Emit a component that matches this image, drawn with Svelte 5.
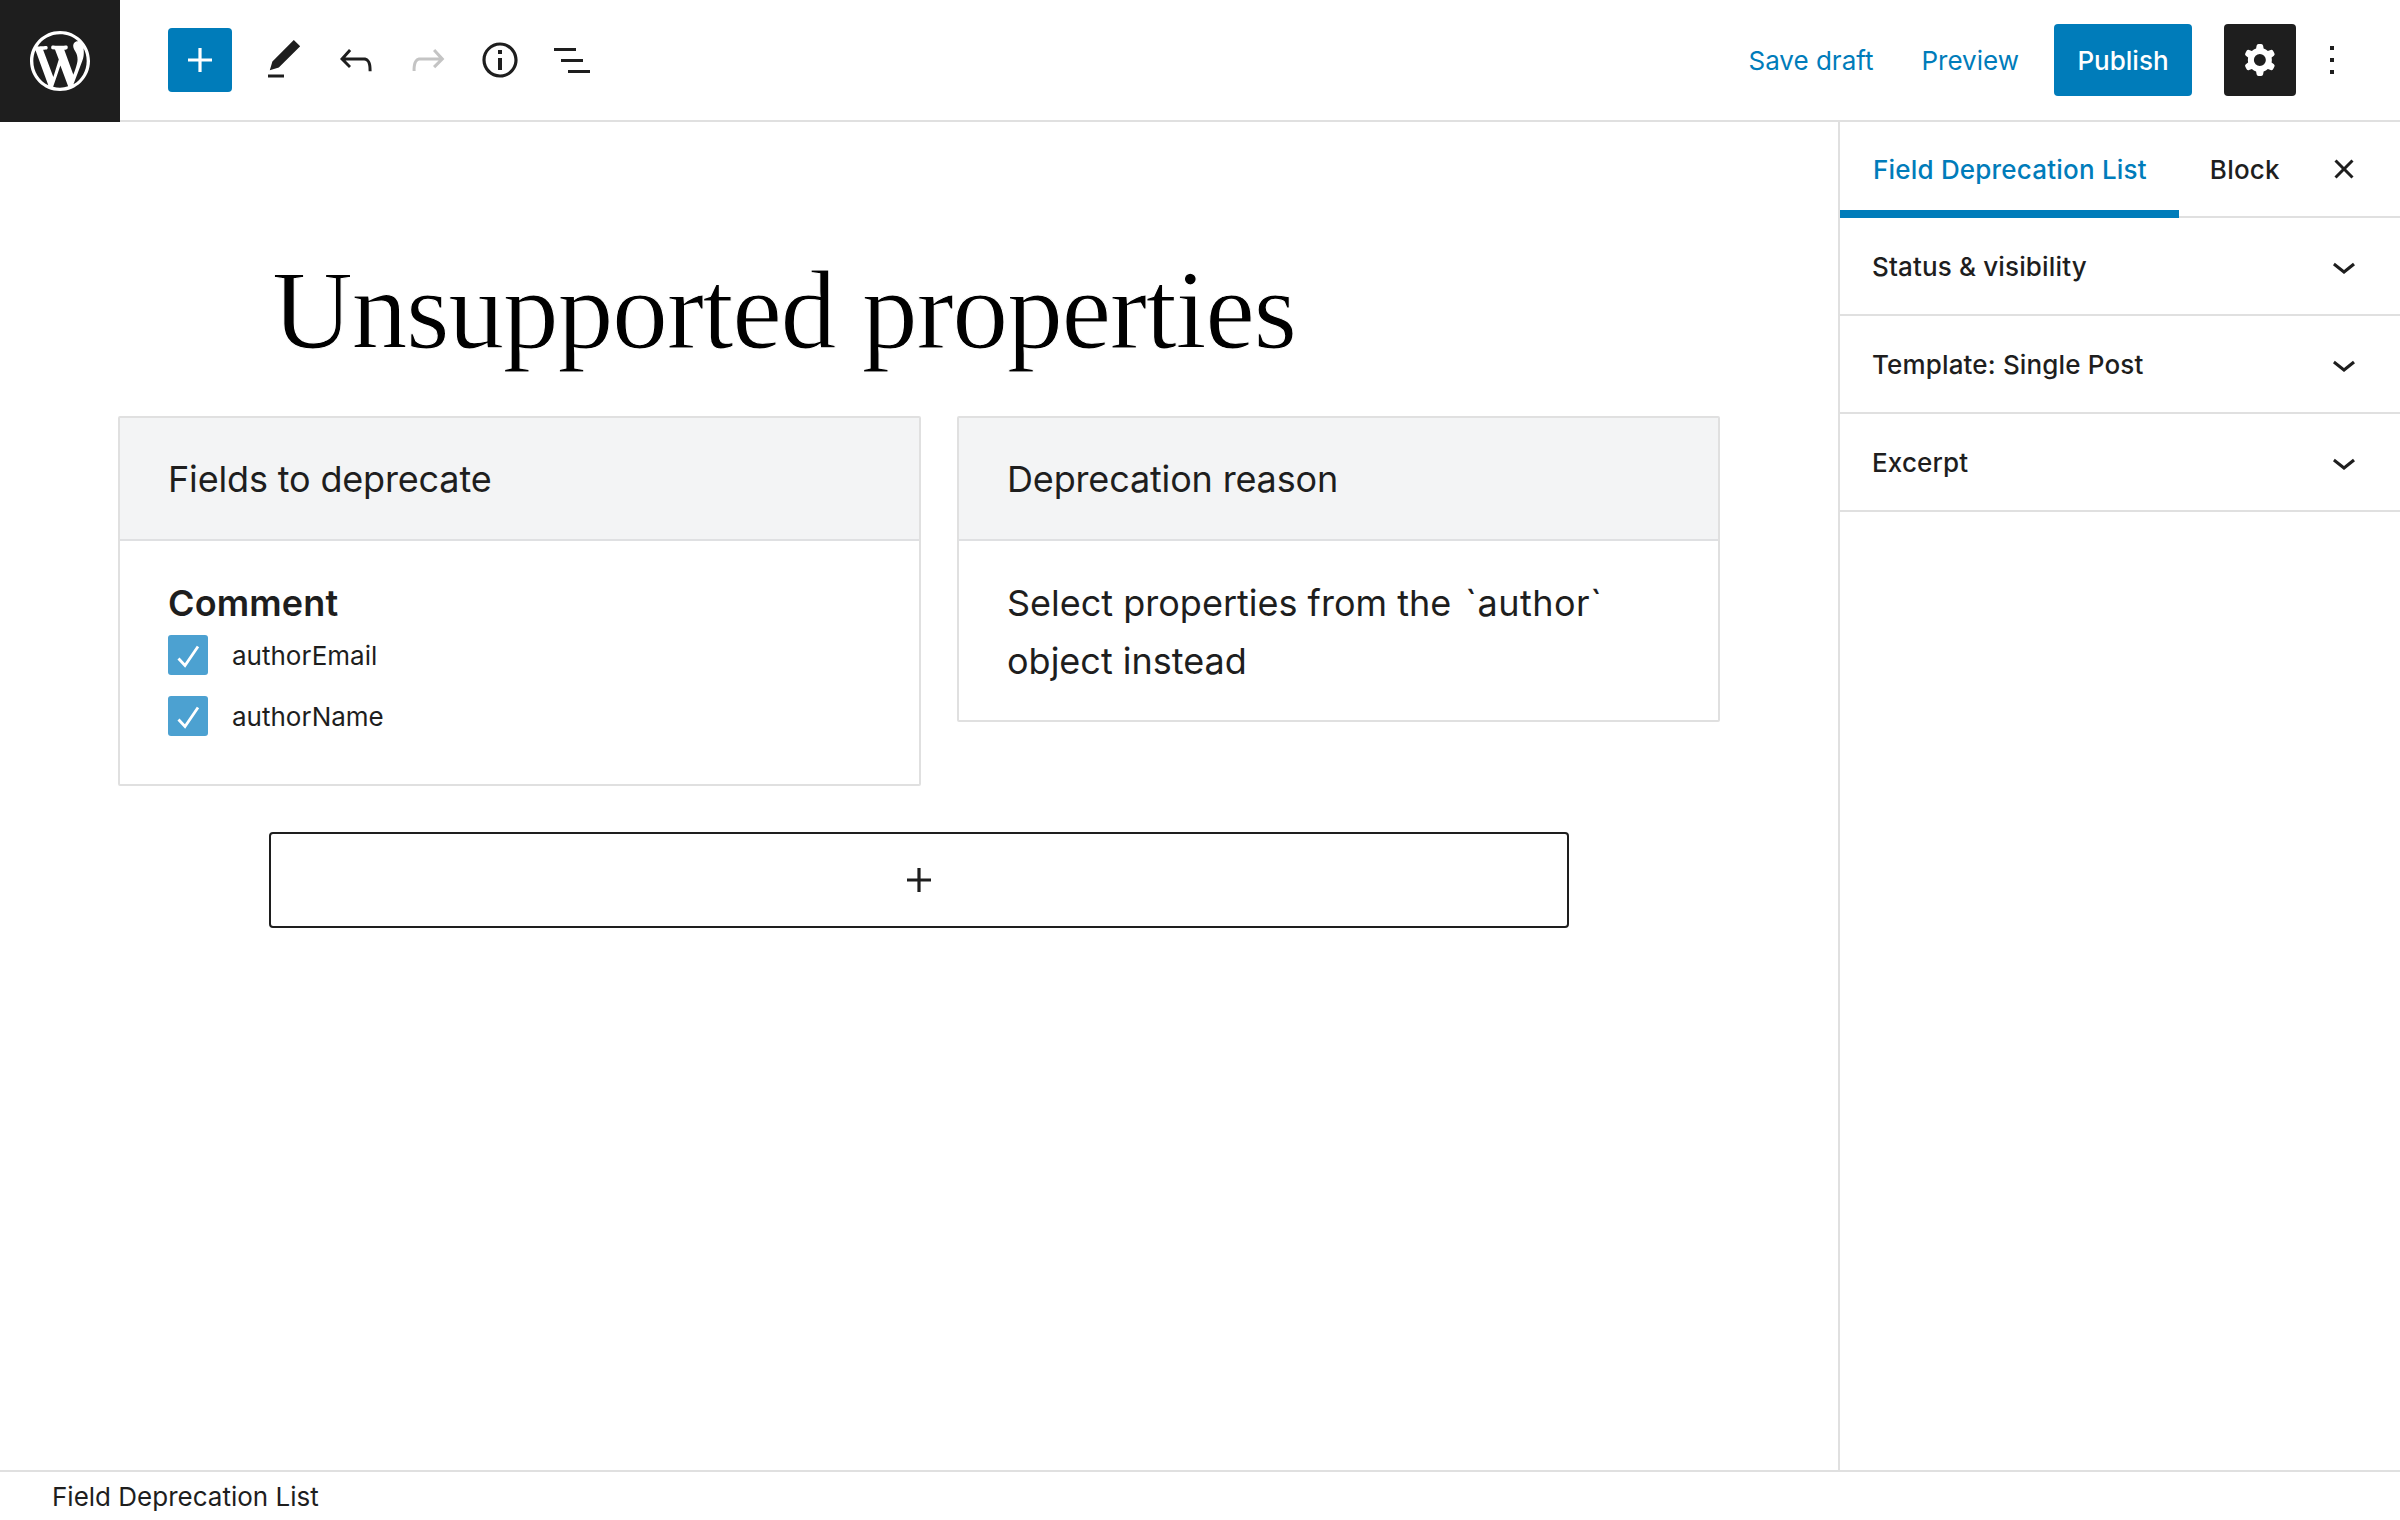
<script>
  const panels = ['Status & visibility', 'Template: Single Post', 'Excerpt'];
  const fields = ['authorEmail', 'authorName'];
</script>

<div class="page">
  <header class="top">
    <a class="logo" href="#wp" aria-label="WordPress">
      <svg viewBox="-2 -2 24 24" width="72" height="72"><path fill="#fff" d="M20 10c0-5.51-4.49-10-10-10C4.48 0 0 4.49 0 10c0 5.52 4.48 10 10 10 5.51 0 10-4.48 10-10zM7.78 15.37L4.37 6.22c.55-.02 1.17-.08 1.17-.08.5-.06.44-1.13-.06-1.11 0 0-1.45.11-2.37.11-.18 0-.37 0-.58-.01C4.12 2.69 6.87 1.11 10 1.11c2.33 0 4.45.87 6.05 2.34-.68-.11-1.65.39-1.65 1.58 0 .74.45 1.36.9 2.1.35.61.55 1.36.55 2.46 0 1.49-1.4 5-1.4 5l-3.03-8.37c.54-.02.82-.17.82-.17.5-.05.44-1.25-.06-1.22 0 0-1.44.12-2.38.12-.87 0-2.33-.12-2.33-.12-.5-.03-.56 1.2-.06 1.22l.92.08 1.26 3.41zM17.41 10c.24-.64.74-1.87.43-4.25.7 1.29 1.05 2.71 1.05 4.25 0 3.29-1.73 6.24-4.4 7.78.97-2.59 1.94-5.2 2.92-7.78zM6.1 18.09C3.12 16.65 1.11 13.53 1.11 10c0-1.3.23-2.48.72-3.59C3.25 10.3 4.67 14.2 6.1 18.09zm4.03-6.63l2.58 6.98c-.86.29-1.76.45-2.71.45-.79 0-1.57-.11-2.29-.33.81-2.38 1.62-4.74 2.42-7.1z"/></svg>
    </a>
    <div class="tools">
      <button class="inserter" aria-label="Add block">
        <svg viewBox="0 0 24 24" width="48" height="48"><path fill="#fff" d="M18 11.2h-5.2V6h-1.6v5.2H6v1.6h5.2V18h1.6v-5.2H18z"/></svg>
      </button>
      <button class="tool" aria-label="Tools">
        <svg viewBox="0 0 24 24" width="48" height="48"><path d="M20.1 5.1L16.9 2 6.2 12.7l-1.3 4.4 4.5-1.3L20.1 5.1zM4 20.8h8v-1.5H4v1.5z"/></svg>
      </button>
      <button class="tool" aria-label="Undo">
        <svg viewBox="0 0 24 24" width="48" height="48"><path d="M18.3 11.7c-.6-.6-1.4-.9-2.3-.9H6.7l2.9-3.3-1.1-1-4.5 5L8.5 16l1-1-2.7-2.7H16c.5 0 .9.2 1.3.5 1 1 1 3.4 1 4.5v.3h1.5v-.2c0-1.5 0-4.3-1.5-5.7z"/></svg>
      </button>
      <button class="tool off" aria-label="Redo">
        <svg viewBox="0 0 24 24" width="48" height="48"><path d="M15.6 6.5l-1.1 1 2.9 3.3H8c-.9 0-1.7.3-2.3.9-1.4 1.5-1.4 4.2-1.4 5.6v.2h1.5v-.3c0-1.1 0-3.5 1-4.5.3-.3.7-.5 1.3-.5h9.2L14.5 15l1.1 1.1 4.6-4.6-4.6-5z"/></svg>
      </button>
      <button class="tool" aria-label="Details">
        <svg viewBox="0 0 24 24" width="48" height="48"><path d="M12 3.2c-4.8 0-8.8 3.9-8.8 8.8 0 4.8 3.9 8.8 8.8 8.8 4.8 0 8.8-3.9 8.8-8.8 0-4.8-4-8.8-8.8-8.8zm0 16c-4 0-7.2-3.3-7.2-7.2C4.8 8 8 4.8 12 4.8s7.2 3.3 7.2 7.2c0 4-3.2 7.2-7.2 7.2zM11 17h2v-6h-2v6zm0-8h2V7h-2v2z"/></svg>
      </button>
      <button class="tool" aria-label="List view">
        <svg viewBox="0 0 24 24" width="48" height="48"><path d="M3 6h11v1.5H3V6zm3.5 5.5h11V13h-11v-1.5zM21 17H10v1.5h11V17z"/></svg>
      </button>
    </div>
    <div class="actions">
      <button class="link">Save draft</button>
      <button class="link">Preview</button>
      <button class="publish">Publish</button>
      <button class="settings" aria-label="Settings">
        <svg viewBox="0 0 24 24" width="48" height="48"><path fill="#fff" fill-rule="evenodd" d="M10.289 4.836A1 1 0 0111.275 4h1.306a1 1 0 01.987.836l.244 1.466c.787.26 1.503.679 2.108 1.218l1.393-.522a1 1 0 011.216.437l.653 1.13a1 1 0 01-.23 1.273l-1.148.944a6.025 6.025 0 010 2.435l1.149.946a1 1 0 01.23 1.272l-.653 1.13a1 1 0 01-1.216.437l-1.394-.522c-.605.54-1.32.958-2.108 1.218l-.244 1.466a1 1 0 01-.987.836h-1.306a1 1 0 01-.986-.836l-.244-1.466a5.995 5.995 0 01-2.108-1.218l-1.394.522a1 1 0 01-1.217-.436l-.653-1.131a1 1 0 01.23-1.272l1.149-.946a6.026 6.026 0 010-2.435l-1.148-.944a1 1 0 01-.23-1.272l.653-1.131a1 1 0 011.217-.437l1.393.522a5.994 5.994 0 012.108-1.218l.244-1.466zM14.929 12a3 3 0 11-6 0 3 3 0 016 0z"/></svg>
      </button>
      <button class="more" aria-label="Options">
        <svg viewBox="0 0 24 24" width="48" height="48"><path d="M13 19h-2v-2h2v2zm0-6h-2v-2h2v2zm0-6h-2V5h2v2z"/></svg>
      </button>
    </div>
  </header>

  <div class="main">
    <main class="editor">
      <h1 class="title">Unsupported properties</h1>
      <div class="columns">
        <section class="card fields">
          <div class="card-head">Fields to deprecate</div>
          <div class="card-body">
            <div class="group">Comment</div>
            {#each fields as f}
              <label class="check">
                <span class="box">
                  <svg viewBox="0 0 40 40" width="40" height="40"><path d="M10.5 23.5l6.5 7L30 11.5" fill="none" stroke="#fff" stroke-width="2.8"/></svg>
                </span>
                <span class="name">{f}</span>
              </label>
            {/each}
          </div>
        </section>
        <section class="card reason">
          <div class="card-head">Deprecation reason</div>
          <div class="card-body">Select properties from the <span class="code">`author`</span> object instead</div>
        </section>
      </div>
      <button class="add" aria-label="Add">
        <svg viewBox="0 0 24 24" width="48" height="48"><path fill="#1e1e1e" d="M18 11.2h-5.2V6h-1.6v5.2H6v1.6h5.2V18h1.6v-5.2H18z"/></svg>
      </button>
    </main>

    <aside class="sidebar">
      <div class="tabs">
        <button class="tab active">Field Deprecation List</button>
        <button class="tab second">Block</button>
        <button class="close" aria-label="Close">
          <svg viewBox="0 0 24 24" width="48" height="48"><path d="M12 13.06l3.712 3.713 1.061-1.06L13.061 12l3.712-3.712-1.06-1.06L12 10.938 8.288 7.227l-1.061 1.06L10.939 12l-3.712 3.712 1.06 1.061L12 13.061z"/></svg>
        </button>
      </div>
      {#each panels as p}
        <div class="panel">
          <span>{p}</span>
          <svg viewBox="0 0 24 24" width="48" height="48"><path d="M17.5 11.6L12 16l-5.5-4.4.9-1.2L12 14l4.5-3.6 1 1.2z"/></svg>
        </div>
      {/each}
    </aside>
  </div>

  <footer class="foot">Field Deprecation List</footer>
</div>

<style>
  :global(body) { margin: 0; background: #fff; }
  .page {
    width: 2400px; height: 1520px; display: flex; flex-direction: column;
    font-family: Inter, "Liberation Sans", sans-serif; color: #1e1e1e; overflow: hidden;
  }
  button { border: 0; background: none; padding: 0; margin: 0; font: inherit; color: inherit; display: flex; align-items: center; justify-content: center; }
  svg { display: block; fill: currentColor; }

  .top { height: 120px; flex: none; display: flex; align-items: center; border-bottom: 2px solid #e0e0e0; }
  .logo { width: 120px; height: 122px; margin-bottom: -2px; background: #1e1e1e; display: flex; align-items: center; justify-content: center; flex: none; }
  .tools { display: flex; align-items: center; margin-left: 48px; }
  .inserter { width: 64px; height: 64px; background: #007cba; border-radius: 4px; margin-right: 16px; }
  .tool { width: 72px; height: 72px; color: #1e1e1e; }
  .tool.off { color: #c4c4c4; }

  .actions { margin-left: auto; display: flex; align-items: center; font-size: 26px; }
  .link { color: #007cba; height: 72px; margin-right: 48px; }
  .link + .link { margin-right: 35px; }
  .publish { width: 138px; height: 72px; background: #007cba; color: #fff; border-radius: 4px; font-weight: 500; margin-right: 32px; }
  .settings { width: 72px; height: 72px; background: #1e1e1e; border-radius: 4px; margin-right: 12px; }
  .more { width: 48px; height: 72px; margin-right: 44px; }

  .main { flex: 1; min-height: 0; display: flex; border-bottom: 2px solid #e0e0e0; }
  .editor { flex: 1; min-width: 0; display: flex; flex-direction: column; align-items: center; }
  .title {
    width: 1300px; box-sizing: border-box; margin: 120px 0 0; padding: 0 0 0 3px;
    font-family: "Liberation Serif", serif; font-weight: 400; font-size: 112px; line-height: 136px;
    letter-spacing: -1.4px; color: #000; -webkit-text-stroke: 1.1px #fff;
  }
  .columns { width: 1602px; display: flex; align-items: flex-start; gap: 36px; margin-top: 38px; }
  .card { border: 2px solid #e0e0e0; border-radius: 2px; box-sizing: border-box; }
  .fields { width: 803px; height: 370px; }
  .reason { width: 763px; height: 306px; }
  .card-head {
    height: 123px; box-sizing: border-box; border-bottom: 2px solid #dfe0e2; background: #f3f4f5;
    padding-left: 48px; display: flex; align-items: center; font-size: 36px; letter-spacing: -0.16px;
  }
  .card-body { padding: 34px 48px 0; font-size: 36px; line-height: 57.6px; }
  .code { margin: 0 2px 0 4px; letter-spacing: 0.5px; }
  .group { font-weight: 600; letter-spacing: 0.15px; }
  .check { display: flex; align-items: center; gap: 24px; font-size: 26px; height: 40px; margin-top: 21px; line-height: 40px; }
  .group + .check { margin-top: 2.4px; }
  .name { padding-top: 2px; }
  .box { width: 40px; height: 40px; background: #4ca1d1; border-radius: 3px; flex: none; }

  .add { width: 1300px; height: 96px; box-sizing: border-box; border: 2px solid #1e1e1e; border-radius: 4px; margin-top: 46px; }

  .sidebar { width: 562px; flex: none; box-sizing: border-box; border-left: 2px solid #e0e0e0; }
  .tabs { height: 96px; box-sizing: border-box; border-bottom: 2px solid #e0e0e0; display: flex; align-items: stretch; font-size: 26px; font-weight: 500; }
  .tab { padding: 0 32px 0 33px; height: 94px; margin-bottom: -2px; letter-spacing: 0.2px; }
  .tab.second { padding-left: 31px; }
  .tab.active { color: #007cba; border-bottom: 8px solid #007cba; box-sizing: border-box; height: 96px; padding-top: 6px; }
  .close { margin-left: auto; margin-right: 32px; width: 48px; height: 94px; }
  .panel { height: 98px; box-sizing: border-box; border-bottom: 2px solid #e0e0e0; display: flex; align-items: center; justify-content: space-between; padding: 0 32px; font-size: 26px; font-weight: 500; letter-spacing: 0.15px; }

  .foot { flex: none; height: 48px; display: flex; align-items: center; padding-left: 52px; font-size: 26px; }
</style>
